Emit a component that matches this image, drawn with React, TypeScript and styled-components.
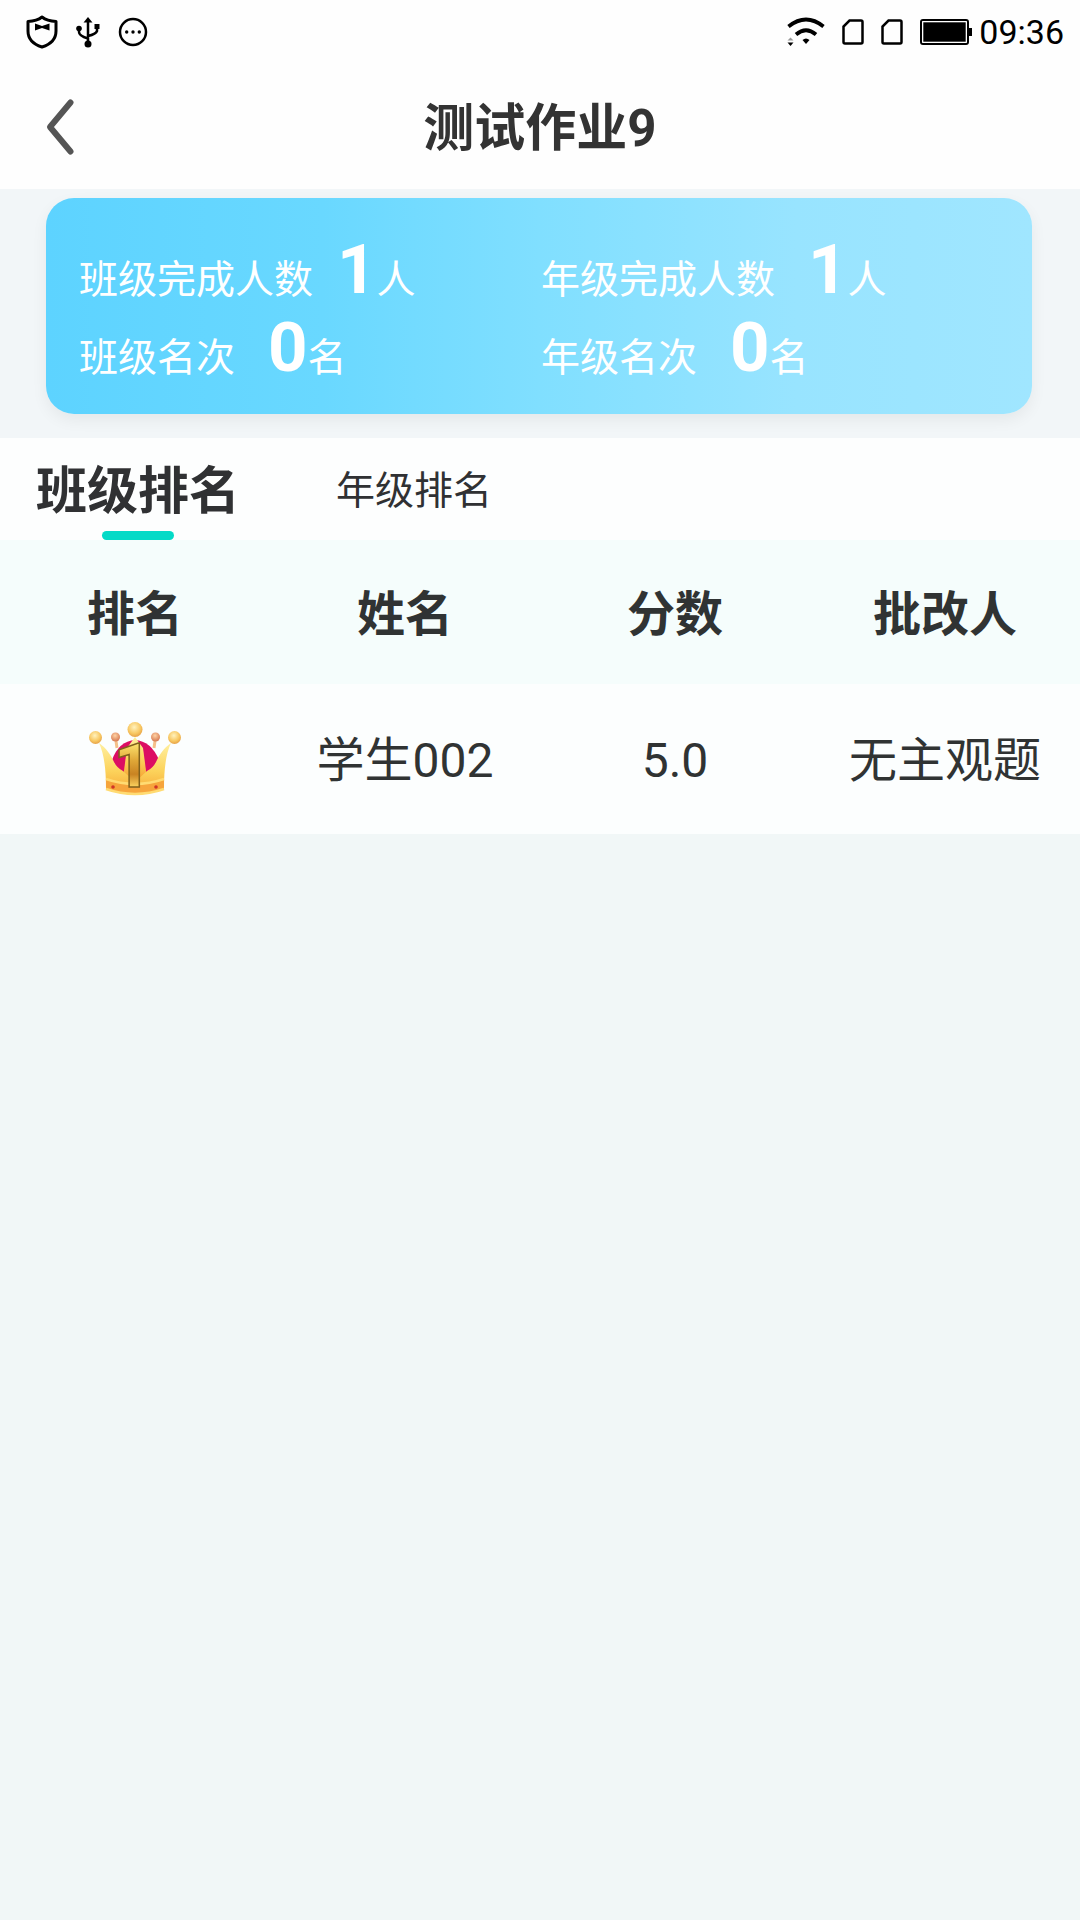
import React, { useState } from "react";
import styled, { createGlobalStyle } from "styled-components";

const GlobalStyle = createGlobalStyle`
  *, *::before, *::after { box-sizing: border-box; }
  body {
    margin: 0;
    background: #f1f7f7;
    color: #303133;
    font-family: Roboto, "Noto Sans CJK SC", sans-serif;
  }
  button { font-family: inherit; color: inherit; }
`;

const Page = styled.div`
  display: flex;
  flex-direction: column;
  min-height: 100vh;
`;

const StatusBar = styled.div`
  display: flex;
  align-items: center;
  justify-content: space-between;
  height: 64px;
  padding: 0 16px 0 26px;
  background: #fefefe;
  color: #000;
`;

const StatusGroup = styled.div<{ $gap: number }>`
  display: flex;
  align-items: center;
  gap: ${(p) => p.$gap}px;
`;

const Clock = styled.time`
  margin-left: -10px;
  font-size: 34px;
  line-height: 40px;
`;

const Header = styled.header`
  display: grid;
  grid-template-columns: 120px 1fr 120px;
  align-items: center;
  height: 125px;
  background: #fefefe;
`;

const BackButton = styled.button`
  display: flex;
  align-items: center;
  height: 100%;
  padding: 0 0 0 44px;
  border: 0;
  background: none;
`;

const Title = styled.h1`
  margin: 0;
  padding-top: 4px;
  text-align: center;
  font-size: 51px;
  line-height: 72px;
  font-weight: 700;
  color: #333;
`;

const Summary = styled.section`
  padding: 9px 48px 24px 46px;
  background: #f2f6f8;
`;

const SummaryCard = styled.dl`
  display: grid;
  grid-template-columns: 462px 1fr;
  margin: 0;
  padding: 33px 33px 27px;
  border-radius: 28px;
  background: linear-gradient(90deg, #5dd3ff, #69d8ff 28%, #80dfff 50%, #98e4ff 76%, #a0e6ff);
  box-shadow: 0 6px 16px rgba(0, 0, 0, 0.06);
  color: #fff;
`;

const Stat = styled.div<{ $gap: number }>`
  display: flex;
  align-items: baseline;
  gap: ${(p) => p.$gap}px;
  height: 78px;
  font-size: 39px;
  line-height: 78px;
`;

const StatValue = styled.dd`
  margin: 0;
`;

const StatNumber = styled.strong`
  font-size: 69px;
  font-weight: 700;
`;

const Tabs = styled.div`
  display: flex;
  height: 102px;
  background: #fdfefe;
`;

const Tab = styled.button<{ $active: boolean }>`
  position: relative;
  width: 276px;
  padding: 0 0 4px;
  border: 0;
  background: none;
  font-size: ${(p) => (p.$active ? 51 : 39)}px;
  font-weight: ${(p) => (p.$active ? 700 : 400)};

  &::after {
    content: "";
    display: ${(p) => (p.$active ? "block" : "none")};
    position: absolute;
    left: 50%;
    bottom: 0;
    width: 72px;
    height: 9px;
    margin-left: -36px;
    border-radius: 5px;
    background: #04dac7;
  }
`;

const RankTable = styled.table`
  width: 100%;
  table-layout: fixed;
  border-collapse: collapse;
  font-size: 48px;
  line-height: 64px;
  text-align: center;
  color: #303333;
`;

const HeadRow = styled.tr`
  height: 144px;
  background: #f5fdfc;
`;

const BodyRow = styled.tr`
  height: 150px;
  background: #fcfefe;
`;

const HeadCell = styled.th`
  padding: 6px 0 0;
  font-weight: 700;
`;

const Cell = styled.td`
  padding: 4px 0 0;
  white-space: nowrap;
`;

const IconCell = styled(Cell)`
  padding: 0;

  svg { display: block; margin: 0 auto; }
`;

const ShieldIcon = () => (
  <svg width="32" height="34" viewBox="0 0 32 34" aria-hidden="true">
    <path d="M16 2 Q21 6 30 6.500 V16 C30 24 24 29.500 16 32 C8 29.500 2 24 2 16 V6.500 Q11 6 16 2Z" fill="none" stroke="#000" strokeWidth="3" strokeLinejoin="round" />
    <path d="M9 8.500 L16 11 L23.500 8.500 V15.500 L16 13 L9 15.500Z" fill="#000" />
  </svg>
);

const UsbIcon = () => (
  <svg width="24" height="32" viewBox="0 0 24 32" aria-hidden="true">
    <path d="M12 4 V28 M3 12 V16 Q3 20 12 22.500 M21 10 V15 Q20 18 12 20" fill="none" stroke="#000" strokeWidth="2.500" />
    <path d="M12 1 L16.500 6.500 H7.500Z" fill="#000" />
    <circle cx="3" cy="12.500" r="2.800" />
    <rect x="18.500" y="8" width="5" height="5" />
    <circle cx="12" cy="28" r="3.500" />
  </svg>
);

const MoreIcon = () => (
  <svg width="30" height="30" viewBox="0 0 30 30" aria-hidden="true">
    <circle cx="15" cy="15" r="13" fill="none" stroke="#000" strokeWidth="2.500" />
    <circle cx="8.700" cy="15" r="1.700" />
    <circle cx="15" cy="15" r="1.700" />
    <circle cx="21.300" cy="15" r="1.700" />
  </svg>
);

const WifiIcon = () => (
  <svg width="38" height="30" viewBox="0 0 38 30" aria-hidden="true">
    <path d="M1.500 9.500 Q19 -4.500 36.500 9.500" fill="none" stroke="#000" strokeWidth="3.800" />
    <path d="M9 17.500 Q19 9 29 17.500" fill="none" stroke="#000" strokeWidth="3.800" />
    <path d="M15.500 23 Q19 20 22.500 23 L19 27Z" />
    <path d="M0.500 23.500 H6.500 L3.500 20.500Z" fill="#999" />
    <path d="M0.500 25.500 H6.500 L3.500 29Z" />
  </svg>
);

const SimIcon = () => (
  <svg width="22" height="26" viewBox="0 0 22 26" aria-hidden="true">
    <path d="M7.500 1.500 H19 Q20.500 1.500 20.500 3 V23 Q20.500 24.500 19 24.500 H3 Q1.500 24.500 1.500 23 V7.500Z" fill="none" stroke="#000" strokeWidth="2.500" />
  </svg>
);

const BatteryIcon = () => (
  <svg width="52" height="26" viewBox="0 0 52 26" aria-hidden="true">
    <rect x="1" y="1" width="47" height="24" rx="2" fill="none" stroke="#000" strokeWidth="2" />
    <rect x="3" y="3" width="43" height="20" />
    <path d="M49 9 H52 V17 H49Z" />
    <rect x="2.800" y="2.800" width="43.400" height="20.400" fill="none" stroke="#fff" strokeWidth="1" />
  </svg>
);

const BackIcon = () => (
  <svg width="32" height="58" viewBox="0 0 32 58" aria-hidden="true">
    <path d="M26.500 4.500 L6 29 L26.500 53.500" fill="none" stroke="#555" strokeWidth="6" strokeLinecap="round" strokeLinejoin="round" />
  </svg>
);

const CrownIcon = () => (
  <svg width="92" height="94" viewBox="0 -10 92 94" role="img" aria-label="第一名">
    <defs>
      <linearGradient id="crownGold" x1="0" y1="0" x2="0" y2="1">
        <stop offset="0" stopColor="#fff0a0" />
        <stop offset="0.550" stopColor="#fcd25a" />
        <stop offset="1" stopColor="#f6a636" />
      </linearGradient>
      <radialGradient id="crownBall" cx="0.450" cy="0.350" r="0.700">
        <stop offset="0" stopColor="#fff2bd" />
        <stop offset="0.600" stopColor="#f8c862" />
        <stop offset="1" stopColor="#e39a40" />
      </radialGradient>
      <radialGradient id="crownCopper" cx="0.450" cy="0.350" r="0.700">
        <stop offset="0" stopColor="#ffd3a4" />
        <stop offset="1" stopColor="#d2704a" />
      </radialGradient>
      <linearGradient id="crownDigit" gradientUnits="userSpaceOnUse" x1="0" y1="20" x2="0" y2="66">
        <stop offset="0" stopColor="#ffe873" />
        <stop offset="0.400" stopColor="#e0a838" />
        <stop offset="0.700" stopColor="#c98322" />
        <stop offset="1" stopColor="#ffd964" />
      </linearGradient>
    </defs>
    <path d="M23 38 Q30 19 46 18 Q62 19 70 38 L61 52 H31Z" fill="#dc0d63" />
    <path d="M27 19 L28 26 M66 19 L65 26" stroke="#f5c08a" strokeWidth="3" />
    <path d="M46 15 L38 26 L34 56 H58 L54 26Z" fill="url(#crownGold)" />
    <path d="M10 21 C17 26 22 33 25 40 Q28 46 34 49 L46 60 L58 49 Q64 46 67 40 C70 33 75 26 82 21 C77 32 75 46 75 67 Q46 78 17 67 C17 46 15 32 10 21Z" fill="url(#crownGold)" />
    <path d="M17 57 Q46 68 75 57 V67 Q46 77 17 67Z" fill="#f6a53c" />
    <path d="M17 57 Q46 67 75 57 M17 67 Q46 77 75 67" fill="none" stroke="#ffdb72" strokeWidth="2.500" />
    <circle cx="24" cy="65" r="1.800" fill="#cf3527" />
    <circle cx="67" cy="65" r="1.800" fill="#cf3527" />
    <circle cx="6.500" cy="15.500" r="6.500" fill="url(#crownBall)" />
    <circle cx="85.500" cy="15.500" r="6.500" fill="url(#crownBall)" />
    <circle cx="26.500" cy="15" r="4.500" fill="url(#crownCopper)" />
    <circle cx="66.500" cy="15" r="4.500" fill="url(#crownCopper)" />
    <circle cx="46" cy="7.500" r="7.500" fill="url(#crownBall)" />
    <text x="43" y="65" textAnchor="middle" fontSize="62" fontWeight="900" fontFamily="Roboto, sans-serif" fill="url(#crownDigit)" stroke="#80601c" strokeWidth="1.500">1</text>
  </svg>
);

const stats = [
  { label: "班级完成人数", value: 1, unit: "人", gap: 24 },
  { label: "年级完成人数", value: 1, unit: "人", gap: 33 },
  { label: "班级名次", value: 0, unit: "名", gap: 33 },
  { label: "年级名次", value: 0, unit: "名", gap: 33 },
];

const tabs = ["班级排名", "年级排名"];
const columns = ["排名", "姓名", "分数", "批改人"];

export default function App() {
  const [active, setActive] = useState(0);

  return (
    <Page>
      <GlobalStyle />
      <StatusBar>
        <StatusGroup $gap={18}>
          <ShieldIcon />
          <UsbIcon />
          <MoreIcon />
        </StatusGroup>
        <StatusGroup $gap={17}>
          <WifiIcon />
          <SimIcon />
          <SimIcon />
          <BatteryIcon />
          <Clock>09:36</Clock>
        </StatusGroup>
      </StatusBar>
      <Header>
        <BackButton type="button" aria-label="返回">
          <BackIcon />
        </BackButton>
        <Title>测试作业9</Title>
      </Header>
      <Summary>
        <SummaryCard>
          {stats.map((s) => (
            <Stat key={s.label} $gap={s.gap}>
              <dt>{s.label}</dt>
              <StatValue>
                <StatNumber>{s.value}</StatNumber>
                {s.unit}
              </StatValue>
            </Stat>
          ))}
        </SummaryCard>
      </Summary>
      <Tabs role="tablist">
        {tabs.map((name, i) => (
          <Tab key={name} type="button" role="tab" aria-selected={i === active} $active={i === active} onClick={() => setActive(i)}>
            {name}
          </Tab>
        ))}
      </Tabs>
      <RankTable>
        <thead>
          <HeadRow>
            {columns.map((c) => (
              <HeadCell key={c} scope="col">{c}</HeadCell>
            ))}
          </HeadRow>
        </thead>
        <tbody>
          <BodyRow>
            <IconCell><CrownIcon /></IconCell>
            <Cell>学生002</Cell>
            <Cell>5.0</Cell>
            <Cell>无主观题</Cell>
          </BodyRow>
        </tbody>
      </RankTable>
    </Page>
  );
}
